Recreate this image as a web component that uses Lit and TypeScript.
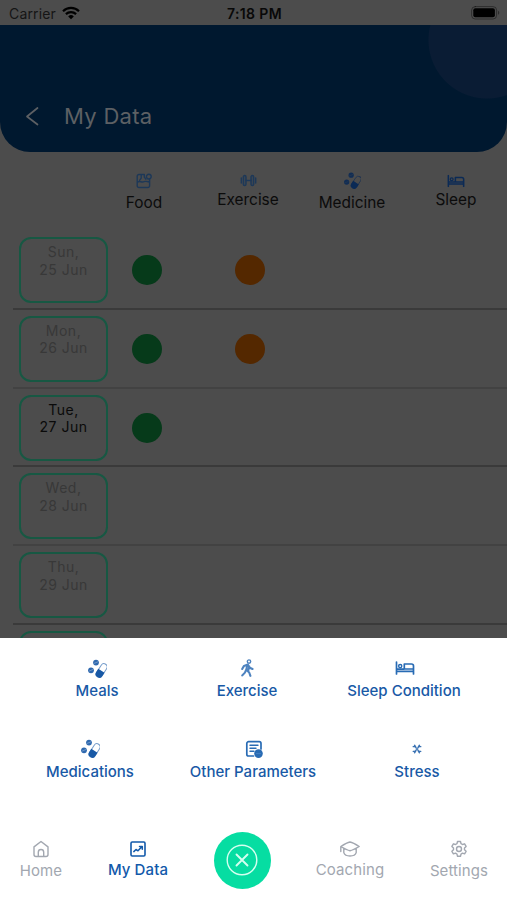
import { LitElement, html, css, svg, TemplateResult } from "lit";
import { customElement, property } from "lit/decorators.js";

const shapes: Record<string, { w: number; h: number; art: TemplateResult }> = {
  food: { w: 16, h: 16, art: svg`<path d="M8.300 1.500H3A1.800 1.800 0 0 0 1.200 3.300v9.400A1.800 1.800 0 0 0 3 14.500h8.800a1.800 1.800 0 0 0 1.800-1.800V6.500M5.200 1.800v3.400L3.600 7.400M8.300 1.800v2.400l1.500 2M1.300 9.300C3.500 7.200 5.500 9.800 8 8.700 10 7.900 11.600 8.600 13.400 9"/><circle cx="12.800" cy="3.600" r="2.400"/>` },
  dumbbell: { w: 17, h: 13, art: svg`<rect x="3.300" y="1.500" width="2.700" height="10" rx="1.350" fill="currentColor" fill-opacity=".35"/><rect x="11" y="1.500" width="2.700" height="10" rx="1.350" fill="currentColor" fill-opacity=".35"/><path d="M6 6.500h5M1.300 4v5M15.700 4v5"/>` },
  pills: { w: 19, h: 19, art: svg`<circle cx="8" cy="3.600" r="2.900" fill="currentColor" stroke="none" opacity=".9"/><circle cx="3" cy="11.300" r="2.900" fill="currentColor" stroke="none" opacity=".9"/><path d="M6.300 4.300l3.400-1.400M1.300 12l3.400-1.400" stroke="var(--paper)" stroke-width=".5" opacity=".6"/><g transform="rotate(33 13.400 11.800)"><rect x="10.200" y="4" width="6.400" height="15" rx="3.200" stroke-width="1" opacity=".6"/><path d="M9.700 11.800h7.400v3.800a3.700 3.700 0 0 1-7.400 0z" fill="currentColor" stroke="none"/></g>` },
  bed: { w: 20, h: 14, art: svg`<path d="M1.500 1v12M1.500 10.400h17M18.500 13V5a2 2 0 0 0-2-2H9.300v5h9.200M1.500 8.100H9" stroke-width="1.700"/><circle cx="5.200" cy="5.100" r="1.600"/>` },
  walk: { w: 14, h: 18, art: svg`<circle cx="9" cy="2.600" r="1.700"/><path d="M7.800 5.500L4 6.900 2.200 10M7.800 5.500l2 3.200 2.700 1.300M7.300 6l-1 4.800 2.900 2.700 1.200 3.300M6.200 10.800L4.900 13.600 2.300 16.400M9.300 7.500l-1 4" stroke-width="2.100"/>` },
  report: { w: 18, h: 18, art: svg`<path d="M16 9V3.500A1.800 1.800 0 0 0 14.200 1.700H3.600A1.800 1.800 0 0 0 1.800 3.500v10.700A1.800 1.800 0 0 0 3.600 16H8.500" stroke-width="1.700"/><path d="M5 5.300h8M5 8.300h6M5 11.300h4" stroke-width="1.400"/><circle cx="13.500" cy="13.600" r="4.300" fill="currentColor" stroke="none"/><path d="M11.500 13.600h4" stroke="#4c86c6" stroke-width=".8"/>` },
  stress: { w: 10, h: 10, art: svg`<path d="M1.200 2.600Q3.600 2 4.300 4.300M2.600 1.200Q3.600 2.500 4.300 4.300M8.800 2.600Q6.400 2 5.700 4.300M7.400 1.200Q6.400 2.500 5.700 4.300M1.200 7.400Q3.600 8 4.300 5.700M2.600 8.800Q3.600 7.500 4.300 5.700M8.800 7.400Q6.400 8 5.700 5.700M7.400 8.800Q6.400 7.500 5.700 5.700" stroke-width="1.300" opacity=".85"/>` },
  home: { w: 18, h: 18, art: svg`<path d="M2 6.900L9 1.500l7 5.400v7.600a2 2 0 0 1-2 2H4a2 2 0 0 1-2-2zM6.300 16.300v-4.100a2.700 2.700 0 0 1 5.400 0v4.100"/>` },
  chart: { w: 16, h: 16, art: svg`<rect x="1" y="1" width="14" height="14" rx="1.200" stroke-width="1.600"/><path d="M3.800 10.600L6 8.500l2 1.300 3.800-4M9.500 5.500h2.800v2.800" stroke-width="1.500"/>` },
  cap: { w: 22, h: 18, art: svg`<path d="M1.800 6.500Q8 2.500 11 2q3 .5 9.200 4.500Q14 10.200 11 10.700 8 10.200 1.800 6.500zM4.800 8.100v4.500c1.500 4.500 10.900 4.500 12.400 0V8.100M1.800 6.500v5"/>` },
  gear: { w: 18, h: 18, art: svg`<path d="M7.500 1.500h3l.5 2.200 1.500.8 2.100-.7 1.500 2.600-1.600 1.500v1.900l1.600 1.500-1.500 2.600-2.100-.7-1.500.9-.5 2.200h-3L7 14.100l-1.500-.9-2.100.7-1.500-2.600 1.600-1.500V7.900L1.900 6.400l1.500-2.600 2.100.7L7 3.700z"/><circle cx="9" cy="9" r="2.500"/>` },
  close: { w: 32, h: 32, art: svg`<circle cx="16" cy="16" r="14.800" stroke-width="1.400"/><path d="M10.500 10.500l11 11M21.500 10.500l-11 11" stroke-width="1.900"/>` },
  back: { w: 14, h: 20, art: svg`<path d="M12.500 2L2 10.500l10.500 8" stroke-width="1.700"/>` },
  wifi: { w: 18, h: 14, art: svg`<path d="M1 5.200a11.500 11.500 0 0 1 16 0M3.900 8.100a7.400 7.400 0 0 1 10.200 0" stroke-width="2.200" stroke-linecap="butt"/><path d="M6.200 10.400a4 4 0 0 1 5.600 0L9 13.200z" fill="currentColor" stroke="none"/>` },
  battery: { w: 29, h: 14, art: svg`<rect x=".6" y=".6" width="25" height="12.400" rx="3.600" stroke-width="1" opacity=".4"/><rect x="2.300" y="2.300" width="21.600" height="9" rx="2" fill="currentColor" stroke="none"/><path d="M27.200 4.800c1.400.6 1.400 3.400 0 4z" fill="currentColor" stroke="none" opacity=".5"/>` },
};

@customElement("ui-icon")
export class UiIcon extends LitElement {
  @property() name = "";
  static styles = css`
    :host { display: block; line-height: 0; }
    svg { display: block; fill: none; stroke: currentColor; stroke-width: 1.4; stroke-linecap: round; stroke-linejoin: round; }
  `;
  render() {
    const s = shapes[this.name];
    return html`<svg width=${s.w} height=${s.h} viewBox="0 0 ${s.w} ${s.h}">${s.art}</svg>`;
  }
}

const columns = [
  { icon: "food", text: "Food", cls: "low pale" },
  { icon: "dumbbell", text: "Exercise", cls: "pale" },
  { icon: "pills", text: "Medicine", cls: "low small" },
  { icon: "bed", text: "Sleep", cls: "small" },
];
interface Day { day: string; date: string; dots: string[]; today?: boolean }
const days: Day[] = [
  { day: "Sun,", date: "25 Jun", dots: ["green", "orange"] },
  { day: "Mon,", date: "26 Jun", dots: ["green", "orange"] },
  { day: "Tue,", date: "27 Jun", dots: ["green"], today: true },
  { day: "Wed,", date: "28 Jun", dots: [] },
  { day: "Thu,", date: "29 Jun", dots: [] },
  { day: "", date: "", dots: [] },
];
interface Action { icon: string; text: string; cls?: string }
const actions: Action[][] = [
  [{ icon: "pills", text: "Meals" }, { icon: "walk", text: "Exercise", cls: "soft" }, { icon: "bed", text: "Sleep Condition", cls: "mid" }],
  [{ icon: "pills", text: "Medications" }, { icon: "report", text: "Other Parameters", cls: "mid" }, { icon: "stress", text: "Stress" }],
];

@customElement("app-root")
export class AppRoot extends LitElement {
  static styles = css`
    :host { display: block; width: 507px; height: 900px; overflow: hidden; background: #4c4c4c; font-family: Inter, "Liberation Sans", sans-serif; --paper: #4c4c4c; }
    * { box-sizing: border-box; }
    .screen { height: 638px; overflow: hidden; }
    .status { height: 25px; display: grid; grid-template-columns: 1fr auto 1fr; align-items: center; padding: 2px 7px 0 9px; color: #000; font-size: 14px; }
    .carrier { display: flex; align-items: center; gap: 6px; color: #151515; letter-spacing: .15px; }
    .carrier ui-icon { color: #000; margin-top: -2px; }
    .time { font-weight: 600; font-size: 14px; letter-spacing: .4px; color: #080808; }
    .status .battery { justify-self: end; margin-top: -1px; }
    .hero { height: 127px; border-radius: 0 0 30px 30px; background: radial-gradient(circle at 487px 15px, #0a1c34 58px, #00182f 59px); display: flex; align-items: flex-end; padding: 0 0 22px 25px; gap: 25px; color: #5d6064; }
    .hero ui-icon { padding-bottom: 4px; }
    .title { font-size: 22px; line-height: 27px; letter-spacing: .3px; }
    .heads { height: 79px; display: grid; grid-template-columns: repeat(4, 104px); padding: 20px 0 0 92px; }
    .head { display: flex; flex-direction: column; align-items: center; color: #0b0b0b; font-size: 15.4px; }
    .head .pic { height: 17px; display: flex; align-items: center; color: #0b2a55; }
    .head.small .pic ui-icon { transform: scale(.9); }
    .head.pale .pic { color: #1d3858; }
    .head span { line-height: 21px; }
    .head.low span { padding-top: 3px; }
    .row { height: 78.75px; display: grid; grid-template-columns: 89px 78px 127px; margin-left: 13px; padding: 6px 0 0 6px; border-bottom: 2px solid #3a3a3a; }
    .row:nth-child(even) { border-bottom-color: #424242; }
    .date { height: 66px; border: 2px solid #175843; border-radius: 12px; display: flex; flex-direction: column; align-items: center; font-size: 14px; line-height: 17.5px; padding-top: 4px; color: #383838; letter-spacing: .5px; }
    .date.today { color: #0a0a0a; }
    .dot { width: 30px; height: 30px; border-radius: 50%; align-self: start; justify-self: center; margin-top: 18px; }
    .green { background: #063a1a; }
    .orange { background: #542800; }
    .sheet { height: 262px; background: #fff; --paper: #fff; color: #1859a6; display: flex; flex-direction: column; padding-top: 20px; }
    .actions { display: grid; grid-template-columns: 194px 106px 208px; height: 80.5px; }
    .actions + .actions { grid-template-columns: 180px 146px 182px; height: 96px; }
    .item { display: flex; flex-direction: column; align-items: center; font-size: 15px; font-weight: 500; }
    .item .pic { height: 20px; display: flex; align-items: center; }
    .item.soft .pic { color: #4e83bf; }
    .item.mid .pic { color: #286bb4; padding-left: 2px; }
    .item span { line-height: 25px; white-space: nowrap; }
    .nav { display: grid; grid-template-columns: 82px 112px 96px 120px 98px; margin-top: -3px; }
    .tab { display: flex; flex-direction: column; align-items: center; padding-top: 8px; color: #a2a7b0; font-size: 15px; letter-spacing: .1px; }
    .tab .pic { height: 18px; display: flex; align-items: center; }
    .tab span { line-height: 25px; }
    .tab.on { color: #1259aa; font-weight: 500; }
    .tab.on span, .tab.up span { margin-top: -1px; }
    .fab { width: 57px; height: 57px; border-radius: 50%; background: #06dda2; color: #d4fff0; display: grid; place-items: center; justify-self: center; }
  `;
  render() {
    return html`
      <div class="screen">
        <div class="status">
          <div class="carrier"><span>Carrier</span><ui-icon name="wifi"></ui-icon></div>
          <div class="time">7:18 PM</div>
          <ui-icon class="battery" name="battery"></ui-icon>
        </div>
        <div class="hero"><ui-icon name="back"></ui-icon><div class="title">My Data</div></div>
        <div class="heads">
          ${columns.map((c) => html`<div class="head ${c.cls}"><div class="pic"><ui-icon name=${c.icon}></ui-icon></div><span>${c.text}</span></div>`)}
        </div>
        <div class="days">
          ${days.map((d) => html`<div class="row">
            <div class="date ${d.today ? "today" : ""}"><span>${d.day}</span><span>${d.date}</span></div>
            ${d.dots.map((c) => html`<div class="dot ${c}"></div>`)}
          </div>`)}
        </div>
      </div>
      <div class="sheet">
        ${actions.map((r) => html`<div class="actions">
          ${r.map((a) => html`<div class="item ${a.cls ?? ""}"><div class="pic"><ui-icon name=${a.icon}></ui-icon></div><span>${a.text}</span></div>`)}
        </div>`)}
        <div class="nav">
          <div class="tab"><div class="pic"><ui-icon name="home"></ui-icon></div><span>Home</span></div>
          <div class="tab on"><div class="pic"><ui-icon name="chart"></ui-icon></div><span>My Data</span></div>
          <div class="fab"><ui-icon name="close"></ui-icon></div>
          <div class="tab up"><div class="pic"><ui-icon name="cap"></ui-icon></div><span>Coaching</span></div>
          <div class="tab"><div class="pic"><ui-icon name="gear"></ui-icon></div><span>Settings</span></div>
        </div>
      </div>`;
  }
}
